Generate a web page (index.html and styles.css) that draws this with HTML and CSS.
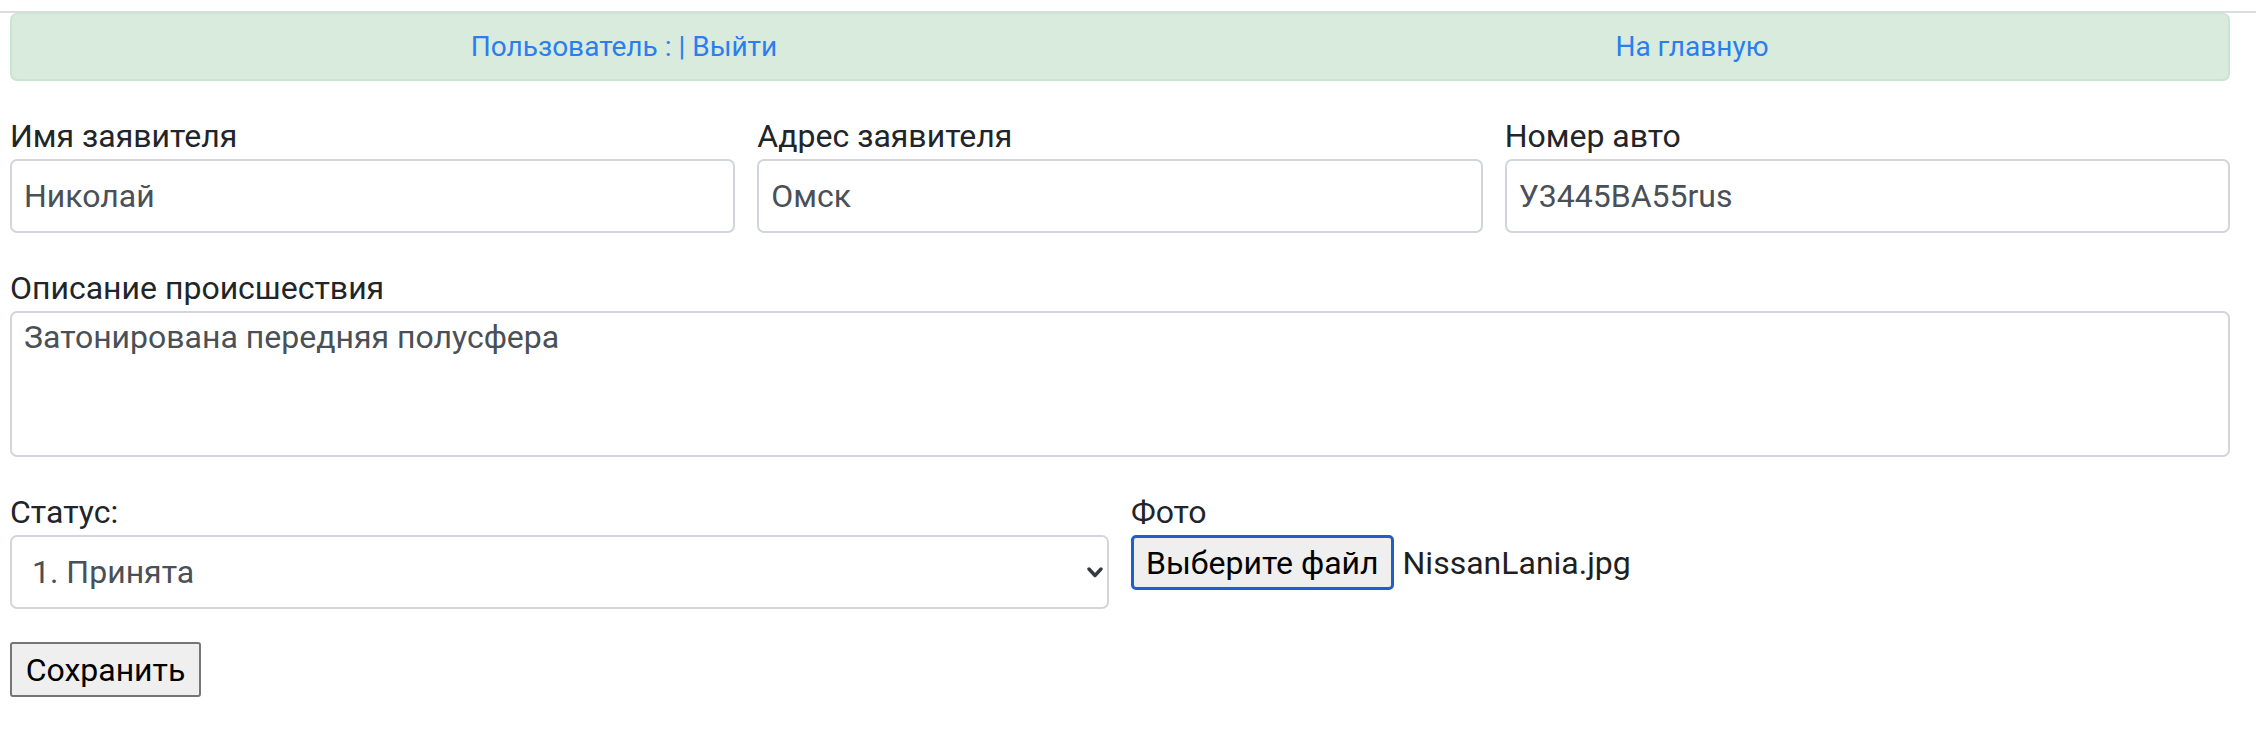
FILE: index.html
```html
<!DOCTYPE html>
<html lang="ru">
<head>
<meta charset="utf-8">
<title>Заявка</title>
<link rel="stylesheet" href="styles.css">
</head>
<body>
<div class="topline"></div>
<div class="page">
  <nav class="userbar">
    <div class="userbar-cell cell-left"><a href="#">Пользователь : </a><a href="#">| Выйти</a></div>
    <div class="userbar-cell cell-right"><a href="#">На главную</a></div>
  </nav>
  <form class="form">
    <div class="row row-3">
      <div class="group">
        <label class="label">Имя заявителя</label>
        <input class="control" type="text" value="Николай">
      </div>
      <div class="group">
        <label class="label">Адрес заявителя</label>
        <input class="control" type="text" value="Омск">
      </div>
      <div class="group">
        <label class="label">Номер авто</label>
        <input class="control" type="text" value="У3445ВА55rus">
      </div>
    </div>
    <div class="row">
      <div class="group">
        <label class="label">Описание происшествия</label>
        <textarea class="control area">Затонирована передняя полусфера</textarea>
      </div>
    </div>
    <div class="row row-2">
      <div class="group">
        <label class="label">Статус:</label>
        <div class="select-wrap">
          <select class="control select">
            <option>1. Принята</option>
            <option>2. В работе</option>
            <option>3. Закрыта</option>
          </select>
          <svg class="chevron" width="16" height="11" viewBox="0 0 16 11"><polyline points="2,2 8,8.5 14,2" fill="none" stroke="#343a40" stroke-width="3.4" stroke-linecap="round" stroke-linejoin="round"/></svg>
        </div>
      </div>
      <div class="group">
        <label class="label">Фото</label>
        <div class="file">
          <button type="button" class="file-btn">Выберите файл</button>
          <span class="file-name">NissanLania.jpg</span>
        </div>
      </div>
    </div>
    <button type="button" class="save">Сохранить</button>
  </form>
</div>
</body>
</html>
```

FILE: styles.css
```css
html, body {
  margin: 0;
  padding: 0;
  background: #ffffff;
}
body {
  font-family: Roboto, "Noto Sans", "Liberation Sans", sans-serif;
  color: #212529;
}
.topline {
  margin-top: 11px;
  height: 2px;
  background: #dcdcdc;
}
.page {
  width: 2220px;
  margin-left: 10px;
}
.userbar {
  display: grid;
  grid-template-columns: 1fr 1fr;
  align-items: center;
  height: 68px;
  box-sizing: border-box;
  background: #d9ebdc;
  border: 2px solid #c9e4cf;
  border-top-width: 1px;
  border-radius: 7px;
  font-size: 28px;
}
.userbar-cell {
  text-align: center;
}
.cell-left {
  padding-left: 116px;
}
.cell-right {
  padding-left: 36px;
}
.userbar a {
  color: #2a7ef0;
  text-decoration: none;
}
.form {
  margin-top: 33px;
}
.row {
  display: grid;
  grid-template-columns: 1fr;
  gap: 22px;
  margin-bottom: 33px;
}
.row-3 {
  grid-template-columns: 1fr 1fr 1fr;
}
.row-2 {
  grid-template-columns: 1fr 1fr;
}
.group {
  display: flex;
  flex-direction: column;
  align-items: flex-start;
}
.label {
  display: block;
  font-size: 32px;
  line-height: 44px;
  margin-bottom: 1px;
  color: #212529;
}
.control {
  width: 100%;
  height: 74px;
  box-sizing: border-box;
  border: 2px solid #d2d6db;
  border-radius: 7px;
  padding: 0 12px;
  font-family: Roboto, "Noto Sans", "Liberation Sans", sans-serif;
  font-size: 32px;
  color: #495057;
  background: #ffffff;
  margin: 0;
  outline: none;
}
.area {
  height: 146px;
  padding: 4px 12px;
  line-height: 40px;
  resize: none;
}
.select-wrap {
  position: relative;
  width: 100%;
}
.select {
  appearance: none;
  -webkit-appearance: none;
  padding-left: 20px;
}
.chevron {
  position: absolute;
  right: 6px;
  top: 32px;
}
.file {
  display: flex;
  align-items: center;
  gap: 9px;
}
.file-btn {
  height: 55px;
  box-sizing: border-box;
  padding: 0 12px;
  margin: 0;
  border: 3px solid #1f5fc9;
  border-radius: 5px;
  background: #efefef;
  color: #000000;
  font-family: Roboto, "Noto Sans", "Liberation Sans", sans-serif;
  font-size: 32px;
}
.file-name {
  font-size: 32px;
  color: #1f1f1f;
}
.save {
  display: block;
  height: 55px;
  width: 191px;
  box-sizing: border-box;
  padding: 0;
  margin: 0;
  border: 2px solid #767676;
  border-radius: 3px;
  background: #efefef;
  color: #000000;
  font-family: Roboto, "Noto Sans", "Liberation Sans", sans-serif;
  font-size: 32px;
}
```
